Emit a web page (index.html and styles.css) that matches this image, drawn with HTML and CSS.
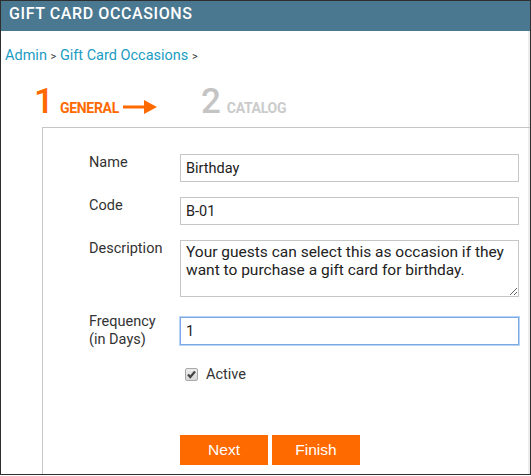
FILE: index.html
```html
<!DOCTYPE html>
<html lang="en">
<head>
  <meta charset="UTF-8">
  <title>Gift Card Occasions</title>
  <link rel="stylesheet" href="styles.css">
</head>
<body>
  <div class="frame">
    <div class="header">GIFT CARD OCCASIONS</div>

    <div class="breadcrumb">
      <a href="#">Admin</a> <span class="sep">&gt;</span> <a href="#">Gift Card Occasions</a> <span class="sep">&gt;</span>
    </div>

    <div class="steps">
      <div class="step active">
        <span class="step-num">1</span>
        <span class="step-name">GENERAL</span>
        <svg class="step-arrow" width="35" height="16" viewBox="0 0 35 16">
          <rect x="0" y="6.5" width="23" height="3" fill="#ff6a00"/>
          <path d="M21 1 L34 8 L21 15 Z" fill="#ff6a00"/>
        </svg>
      </div>
      <div class="step">
        <span class="step-num">2</span>
        <span class="step-name">CATALOG</span>
      </div>
    </div>

    <div class="panel">
      <form class="form">
        <div class="form-row">
          <label for="name">Name</label>
          <input type="text" id="name" value="Birthday">
        </div>

        <div class="form-row">
          <label for="code">Code</label>
          <input type="text" id="code" value="B-01">
        </div>

        <div class="form-row">
          <label for="description">Description</label>
          <textarea id="description">Your guests can select this as occasion if they want to purchase a gift card for birthday.</textarea>
        </div>

        <div class="form-row freq-row">
          <label for="frequency">Frequency<br>(in Days)</label>
          <input type="text" id="frequency" class="focused" value="1">
        </div>

        <label class="check-row">
          <span class="checkbox">
            <svg width="11" height="11" viewBox="0 0 11 11">
              <path d="M2 5.5 L4.3 8 L9 2.5" fill="none" stroke="#444" stroke-width="2.2"/>
            </svg>
          </span>
          <span class="check-text">Active</span>
        </label>

        <div class="button-row">
          <button type="button">Next</button>
          <button type="button">Finish</button>
        </div>
      </form>
    </div>
  </div>
</body>
</html>
```

FILE: styles.css
```css
body {
  margin: 0;
  padding: 0;
  background-color: #fff;
  font-family: Roboto, "Liberation Sans", sans-serif;
  color: #333;
}

.frame {
  width: 531px;
  height: 475px;
  border: 1px solid #2e2e2e;
  box-sizing: border-box;
  overflow: hidden;
  box-shadow: inset -2px 0 0 #ececec;
}

.header {
  height: 30px;
  box-sizing: border-box;
  padding: 3px 8px 0;
  background-color: #4a7891;
  color: #fff;
  font-size: 16px;
  line-height: 20px;
  font-weight: 500;
  letter-spacing: 0.6px;
}

.breadcrumb {
  margin-top: 17px;
  padding-left: 4px;
  font-size: 14.5px;
  line-height: 16px;
}

.breadcrumb a {
  color: #1b9cc2;
  text-decoration: none;
}

.breadcrumb .sep {
  color: #333;
  font-size: 11px;
}

.steps {
  display: flex;
  align-items: center;
  margin-top: 17px;
  padding-left: 33px;
  height: 40px;
}

.step {
  display: flex;
  align-items: baseline;
}

.step-num {
  font-size: 35px;
  line-height: 40px;
  font-weight: 500;
  color: #c4c4c4;
}

.step-name {
  margin-left: 6px;
  font-size: 14px;
  font-weight: bold;
  letter-spacing: -0.3px;
  color: #cbcbcb;
}

.step.active .step-num,
.step.active .step-name {
  color: #ff6a00;
}

.step-arrow {
  margin-left: 4px;
  align-self: center;
  position: relative;
  top: 5px;
}

.step + .step {
  margin-left: 43px;
}

.panel {
  margin: 5px 0 0 41px;
  height: 400px;
  border-top: 1px solid #c6c6c6;
  border-left: 1px solid #c6c6c6;
  padding: 26px 0 0 46px;
}

.form-row {
  display: flex;
  align-items: flex-start;
  margin-bottom: 15px;
}

.form-row label {
  width: 91px;
  flex-shrink: 0;
  font-size: 14.5px;
  line-height: 18px;
  color: #333;
}

.form-row input,
.form-row textarea {
  width: 339px;
  height: 28px;
  box-sizing: border-box;
  border: 1px solid #c6c6c6;
  padding: 0 5px;
  margin: 0;
  font-family: Roboto, "Liberation Sans", sans-serif;
  font-size: 14.5px;
  color: #222;
  outline: none;
}

.form-row textarea {
  height: 57px;
  padding: 2px 5px;
  font-size: 15.5px;
  line-height: 18px;
  resize: vertical;
}

.freq-row {
  margin-top: 16px;
}

.freq-row input {
  margin-top: 4px;
}

.form-row input.focused {
  border-color: #7ba9e6;
  box-shadow: 0 0 0 1px #b9d3f5;
}

.check-row {
  display: flex;
  align-items: center;
  margin: 16px 0 0 96px;
  height: 18px;
}

.checkbox {
  display: flex;
  align-items: center;
  justify-content: center;
  width: 13px;
  height: 13px;
  box-sizing: border-box;
  border: 1px solid #a8a8a8;
  border-radius: 2px;
  background: linear-gradient(#ececec, #d8d8d8);
}

.check-text {
  margin-left: 8px;
  font-size: 14.5px;
  color: #333;
}

.button-row {
  display: flex;
  gap: 4px;
  margin: 52px 0 0 91px;
}

.button-row button {
  width: 88px;
  height: 30px;
  border: none;
  background-color: #ff6a00;
  color: #fff;
  font-family: "Liberation Sans", Arial, sans-serif;
  font-size: 15.5px;
  cursor: pointer;
}
```
